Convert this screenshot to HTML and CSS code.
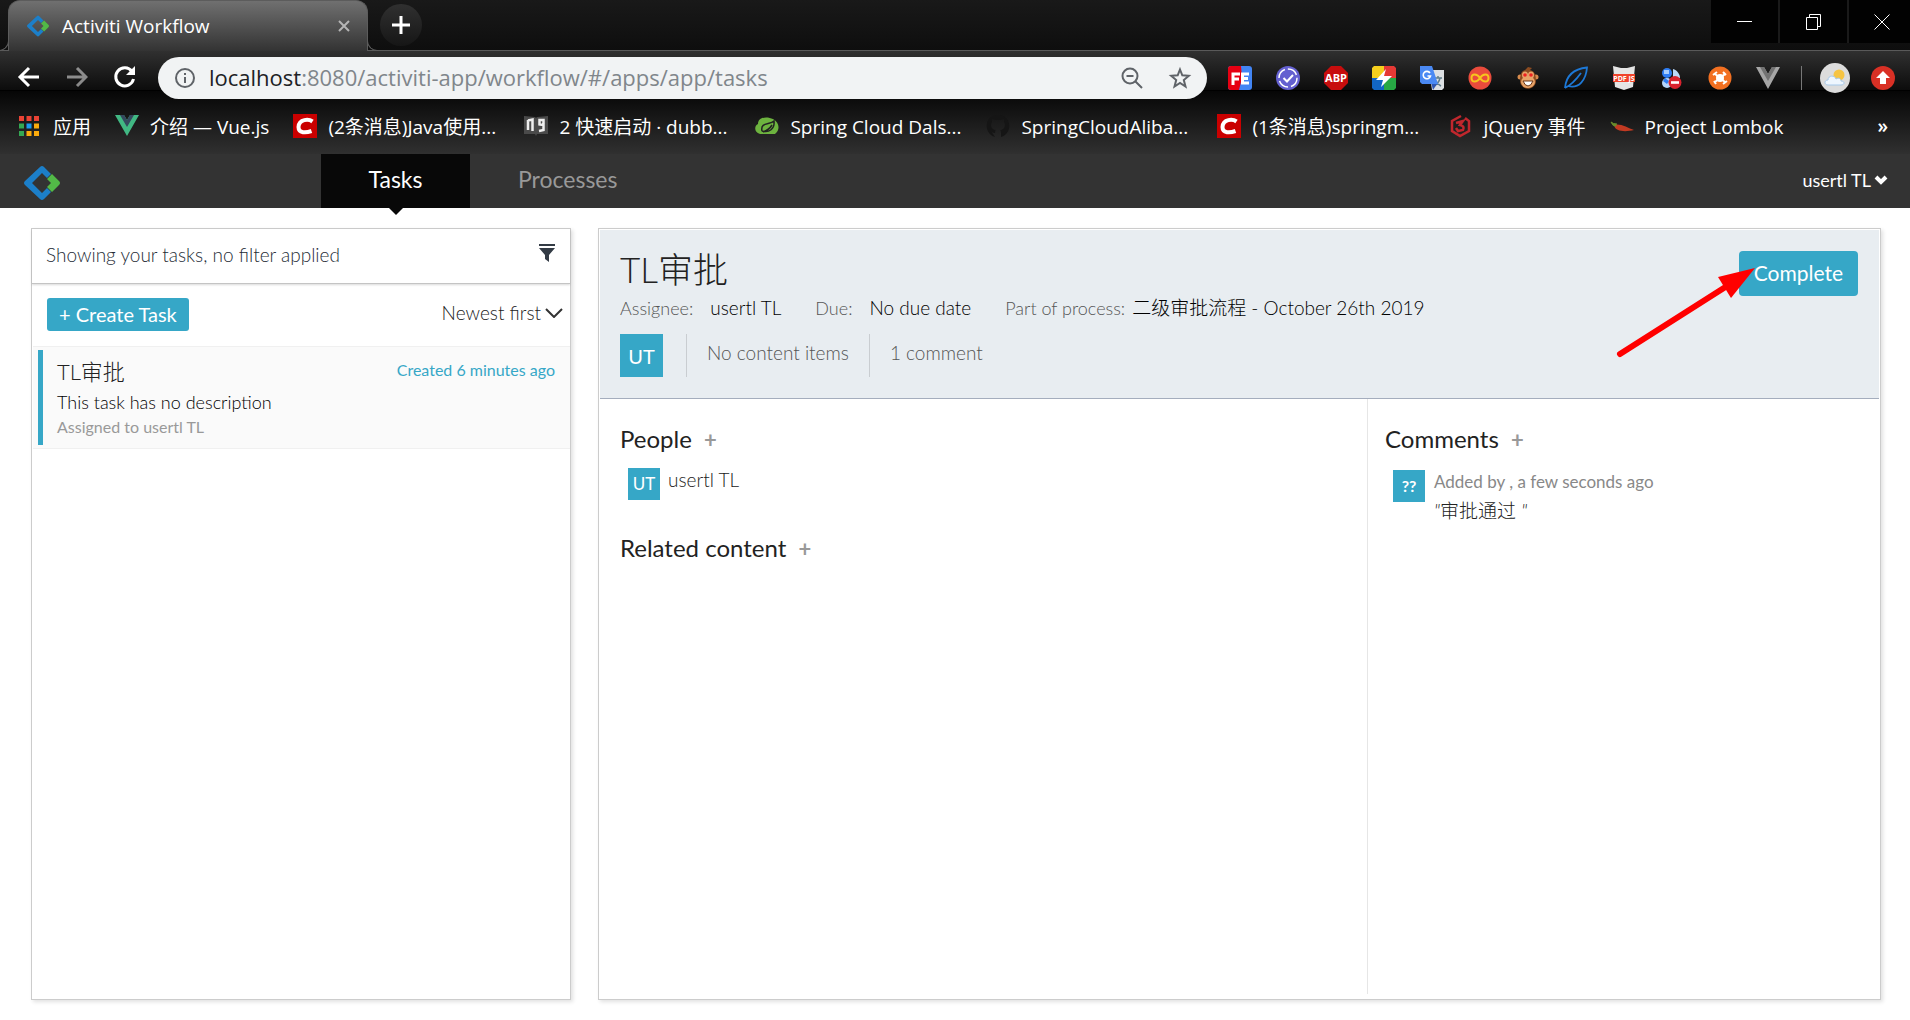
FILE: index.html
```html
<!DOCTYPE html>
<html lang="en">
<head>
<meta charset="utf-8">
<title>Activiti Workflow</title>
<link rel="stylesheet" href="styles.css">
</head>
<body>
<svg class="defs" aria-hidden="true">
  <symbol id="diamond" viewBox="0 0 36 36">
    <path d="M27 27L20 34Q18 36 16 34L1 20Q-1 18 1 16L16 2Q18 0 20 2L27 9L23 13L18 8L8 18L18 28L23 23Z" fill="#1c7fc9"/>
    <path d="M28 9L35 16Q37 18 35 20L28 27L23 22L27 18L23 14Z" fill="#52b947"/>
  </symbol>
  <symbol id="csdn" viewBox="0 0 24 24">
    <path d="M0 0H24V24H0Z" fill="#ca0000"/>
    <path d="M19.500 7.500C16 5 6 4.500 5.500 13C5.500 19.500 13 19 18.500 17" fill="none" stroke="#fff" stroke-width="4"/>
  </symbol>
</svg>

<header class="browser">
  <div class="tabstrip">
    <div class="tab">
      <svg class="tab-icon" viewBox="0 0 24 24"><use href="#diamond" x="1" y="1" width="22" height="22"/></svg>
      <span class="tab-title">Activiti Workflow</span>
      <button class="tab-close" aria-label="Close tab"><svg viewBox="0 0 12 12"><path d="M1 1L11 11M11 1L1 11"/></svg></button>
    </div>
    <button class="new-tab" aria-label="New tab"><svg viewBox="0 0 18 18"><path d="M9 0V18M0 9H18"/></svg></button>
    <div class="window-buttons">
      <button aria-label="Minimize"><svg viewBox="0 0 16 16"><path d="M0 7.500H15"/></svg></button>
      <button aria-label="Restore"><svg viewBox="0 0 16 16"><path d="M.5 3.500H11.500V15.500H.5ZM3.500 3.500V.5H14.500V12.500H11.500"/></svg></button>
      <button class="close" aria-label="Close"><svg viewBox="0 0 16 16"><path d="M.5 .5L15.500 15.500M15.500 .5L.5 15.500"/></svg></button>
    </div>
  </div>

  <div class="toolbar">
    <button class="nav-button" aria-label="Back"><svg viewBox="0 0 24 24"><path d="M23 12H4M13 3L4 12L13 21"/></svg></button>
    <button class="nav-button dim" aria-label="Forward"><svg viewBox="0 0 24 24"><path d="M3 12H22M13 3L22 12L13 21"/></svg></button>
    <button class="nav-button" aria-label="Reload"><svg viewBox="0 0 24 24"><path d="M20 6.500A9 9 0 1 0 21.500 14"/><path class="solid" d="M23 1V10H14Z"/></svg></button>
    <div class="omnibox">
      <svg class="omni-icon" viewBox="0 0 24 24"><circle cx="12" cy="12" r="9"/><path d="M12 11V17M12 7V9"/></svg>
      <div class="url"><span class="host">localhost</span>:8080/activiti-app/workflow/#/apps/app/tasks</div>
      <button class="omni-button" aria-label="Zoom"><svg class="omni-icon" viewBox="0 0 24 24"><circle cx="10" cy="10" r="7.500"/><path d="M15.500 15.500L22 22M6.500 10H13.500"/></svg></button>
      <button class="omni-button" aria-label="Bookmark"><svg class="omni-icon" viewBox="0 0 24 24"><path d="M12 3.500L14.300 9.300L20.800 9.800L15.800 14L17.500 20.500L12 17L6.500 20.500L8.200 14L3.200 9.800L9.700 9.300Z"/></svg></button>
    </div>
    <div class="extensions">
      <svg viewBox="0 0 24 24"><rect width="24" height="24" rx="3" fill="#4285f4"/><path d="M3 0H13L14 12L11 24H3Q0 24 0 21V3Q0 0 3 0" fill="#e60012"/><path d="M5 19V8H12M5 13H11M21 8H14.500V17H21M14.500 12.500H20" fill="none" stroke="#fff" stroke-width="3"/></svg>
      <svg viewBox="0 0 24 24"><circle cx="12" cy="12" r="12" fill="#6460d0"/><circle cx="12" cy="12" r="9" fill="none" stroke="#fff" stroke-width="1.500" stroke-dasharray="11 3"/><path d="M7.500 12L11 15.500L17 9" fill="none" stroke="#fff" stroke-width="2"/></svg>
      <svg viewBox="0 0 24 24"><path d="M7 0H17L24 7V17L17 24H7L0 17V7Z" fill="#c70d0d"/><text x="12" y="16" class="abp">ABP</text></svg>
      <svg viewBox="0 0 24 24"><path d="M2 0H12V12H0V2Z" fill="#f5cf1d"/><path d="M12 0H22L24 2V12H12Z" fill="#e53935"/><path d="M0 12H12V24H2L0 22Z" fill="#1266c4"/><path d="M12 12H24V22L22 24H12Z" fill="#27a844"/><path d="M14 3L4 14H11L9 21L20 10H12Z" fill="#fff"/></svg>
      <svg viewBox="0 0 24 24"><path d="M9 4H24V22L22 24H12Z" fill="#dde0e3"/><path d="M14 12H22M18 10V12M20 12Q19 17 14 20M15 14Q17 18 21 20" fill="none" stroke="#607d8b" stroke-width="1.500"/><path d="M0 0H12L18 18H2L0 16Z" fill="#4a89f3"/><path d="M11.500 18H17L13 24Z" fill="#2f56b0"/><path d="M10 7A3.700 3.700 0 1 0 10.500 10H7.500" fill="none" stroke="#fff" stroke-width="1.600"/></svg>
      <svg viewBox="0 0 24 24"><circle cx="12" cy="12" r="11.500" fill="#e94b3c"/><path d="M12 12C9 7.500 3.500 7 3.500 12S9 16.500 12 12S20.500 7 20.500 12S15 16.500 12 12" fill="none" stroke="#f7c51d" stroke-width="2"/></svg>
      <svg viewBox="0 0 24 24"><circle cx="4" cy="11" r="2.500" fill="#d78b4d"/><circle cx="20" cy="11" r="2.500" fill="#d78b4d"/><path d="M9 4L12 1L16 2L14 4C20 5 20 12 20 16C18 25 6 25 4 16C4 12 4 5 9 4" fill="#8c4b20"/><ellipse cx="12" cy="16" rx="7" ry="6" fill="#e8a468"/><ellipse cx="9" cy="9" rx="3" ry="3.500" fill="#e8a468"/><ellipse cx="15" cy="9" rx="3" ry="3.500" fill="#e8a468"/><circle cx="9" cy="9" r="1.800" fill="#e22"/><circle cx="15" cy="9" r="1.800" fill="#e22"/><path d="M7 15H17Q15 20 12 20T7 15" fill="#fff" stroke="#6b3515"/></svg>
      <svg viewBox="0 0 24 24"><path d="M1 22C2 10 9 3 23 1.500C22 14 15 23 4 20M1 22Q9 18 17 7" fill="none" stroke="#1d78d6" stroke-width="1.800"/></svg>
      <svg viewBox="0 0 24 24"><path d="M1 0L9 2H15L23 0L21 21L12 24L3 21Z" fill="#e5e5e5"/><path d="M1 8H23V16H1Z" fill="#f0432b"/><text x="12" y="15" class="pdf">PDF JS</text></svg>
      <svg viewBox="0 0 24 24"><circle cx="7" cy="7" r="5" fill="#2f7df2"/><path d="M13 3C17 4 20 8 20 12H13Z" fill="#bcd9f8"/><rect x="4" y="4" width="5" height="4" fill="#a9cdfb"/><circle cx="7" cy="17" r="5" fill="#b6d5fb"/><path d="M5 12L9 15L7 18L3 15Z" fill="#2f7df2"/><circle cx="15" cy="16.500" r="6.500" fill="#d9232e"/><path d="M11 16.500H19" stroke="#fff" stroke-width="2.600"/></svg>
      <svg viewBox="0 0 24 24"><circle cx="12" cy="12" r="11.500" fill="#f37021"/><circle cx="12" cy="12" r="4" fill="#fff"/><path d="M7 8L17 16M17 8L7 16M5 9L9 6M15 6L18 9M6 15L8 18M15 18L19 15" stroke="#fff" stroke-width="2"/></svg>
      <svg viewBox="0 0 24 24"><path d="M0 1H8L12 8L16 1H24L12 23Z" fill="#a6a6a6"/><path d="M4 1H8L12 8L16 1H20L12 15Z" fill="#737373"/></svg>
    </div>
    <div class="profile">
      <svg class="avatar" viewBox="0 0 30 30"><circle cx="15" cy="15" r="15" fill="#dcdcdc"/><circle cx="19" cy="12" r="5.500" fill="#f6c443"/><path d="M8 22C4 22 4 17 8 17C8 12 15 12 16 16C19 14 21 16 21 18C25 18 25 22 21 22Z" fill="#eef6fe" stroke="#a6c9ea"/></svg>
      <svg viewBox="0 0 24 24"><circle cx="12" cy="12" r="12" fill="#d93025"/><path d="M12 5L19 12H15V18H9V12H5Z" fill="#fff"/></svg>
    </div>
  </div>

  <nav class="bookmarks" aria-label="Bookmarks">
    <a href="#" class="apps"><svg viewBox="0 0 20 20"><path d="M0 0H5V5H0ZM7.500 0H12.500V5H7.500ZM15 0H20V5H15Z" fill="#ea4335"/><path d="M0 7.500H5V12.500H0ZM0 15H5V20H0Z" fill="#34a853"/><path d="M7.500 7.500H12.500V12.500H7.500Z" fill="#1a9af0"/><path d="M15 7.500H20V12.500H15ZM7.500 15H12.500V20H7.500ZM15 15H20V20H15Z" fill="#fbab0c"/></svg><span>应用</span></a>
    <a href="#"><svg viewBox="0 0 24 24"><path d="M0 1H9L12 6L15 1H24L12 22Z" fill="#41b883"/><path d="M5 1H9L12 6L15 1H19L12 13Z" fill="#35495e"/></svg><span>介绍 — Vue.js</span></a>
    <a href="#" class="long"><svg><use href="#csdn"/></svg><span>(2条消息)Java使用...</span></a>
    <a href="#" class="long"><svg viewBox="0 0 24 24"><path d="M0 2L11 3L12 4L13 3L24 2V20L13 20L12 22L11 20L0 20Z" fill="#4a4a4a"/><path d="M4 6V16M4 6.500L8.500 5.500V17M19.500 12V6H15.500V10.500L19.500 11V16L15 17" fill="none" stroke="#eee" stroke-width="2.500"/></svg><span>2 快速启动 · dubb...</span></a>
    <a href="#" class="long"><svg viewBox="0 0 24 24"><path d="M5 20C-1 18-1 12 3 10C3 3 12 2 18 5C25 9 25 16 20 20Z" fill="#6db33f"/><path d="M7 17C14 19 20 15 19 7C15 11 5 8 7 17M8 18Q14 16 17 11" fill="none" stroke="#222" stroke-width="1.500"/></svg><span>Spring Cloud Dals...</span></a>
    <a href="#" class="long"><svg viewBox="0 0 24 24"><path d="M9 23C-3 19-2 1 12 1S27 19 15 23V19C15 17 14.500 17 14.500 16C18 15.500 19 13 19 11C19 9 18 8.500 18 7.500V5C16 5 15 6 15 6H9S8 5 6 5V7.500C6 8.500 5 9 5 11C5 13 6 15.500 9.500 16L9 19C7 19 6 18 5 17" fill="#151515"/></svg><span>SpringCloudAliba...</span></a>
    <a href="#" class="long"><svg><use href="#csdn"/></svg><span>(1条消息)springm...</span></a>
    <a href="#"><svg viewBox="0 0 24 24"><path d="M13 2L4 7V17L12 22L21 17V7L17 4M8 9L15 7L12 11Q17 12 15 16L10 17L8 14" fill="none" stroke="#c1272d" stroke-width="2.500"/></svg><span>jQuery 事件</span></a>
    <a href="#"><svg viewBox="0 0 24 24"><path d="M4 11C10 9 18 14 24 16C16 18 5 18 4 11" fill="#c23a22"/><path d="M6 12Q3 13 1 8Q3 10 7 10" fill="#6a8b2b" stroke="#6a8b2b"/></svg><span>Project Lombok</span></a>
    <button class="more" aria-label="More bookmarks">»</button>
  </nav>
</header>

<div class="app-bar">
  <a href="#" class="brand" aria-label="Home"><svg><use href="#diamond"/></svg></a>
  <nav class="app-nav">
    <a href="#" class="active">Tasks</a>
    <a href="#">Processes</a>
  </nav>
  <button class="user-menu">usertl TL<svg viewBox="0 0 14 10"><path d="M2 2L7 7L12 2"/></svg></button>
</div>

<main class="workspace">
  <section class="task-list">
    <div class="filter">
      <span>Showing your tasks, no filter applied</span>
      <button class="filter-button" aria-label="Filter"><svg viewBox="0 0 16 18"><path d="M0 0H16V2H0ZM0 4H16L10 11V18L6 15V11Z"/></svg></button>
    </div>
    <div class="list-actions">
      <button class="create">+ Create Task</button>
      <button class="sort">Newest first<svg viewBox="0 0 18 10"><path d="M1 1L9 9L17 1"/></svg></button>
    </div>
    <article class="task">
      <div class="task-head"><h3>TL审批</h3><span class="created">Created 6 minutes ago</span></div>
      <p class="summary">This task has no description</p>
      <p class="assigned">Assigned to usertl TL</p>
    </article>
  </section>

  <section class="detail">
    <header class="detail-head">
      <div class="detail-info">
        <h1>TL审批</h1>
        <dl class="meta">
          <div><dt>Assignee:</dt><dd>usertl TL</dd></div>
          <div><dt>Due:</dt><dd>No due date</dd></div>
          <div class="process"><dt>Part of process:</dt><dd>二级审批流程 - October 26th 2019</dd></div>
        </dl>
        <div class="counts">
          <span class="badge large">UT</span>
          <span class="count">No content items</span>
          <span class="count">1 comment</span>
        </div>
      </div>
      <div class="complete-wrap">
        <button class="complete">Complete</button>
        <svg class="pointer" viewBox="0 0 142 92" aria-hidden="true"><path d="M5 86L112 18" fill="none" stroke="#f00" stroke-width="6" stroke-linecap="round"/><path d="M140 0L103 9L116 30Z" fill="#f00"/></svg>
      </div>
    </header>
    <div class="detail-body">
      <div class="main-col">
        <h2>People <button class="add" aria-label="Add person">+</button></h2>
        <div class="person"><span class="badge">UT</span><span class="person-name">usertl TL</span></div>
        <h2>Related content <button class="add" aria-label="Add content">+</button></h2>
      </div>
      <aside class="comments">
        <h2>Comments <button class="add" aria-label="Add comment">+</button></h2>
        <div class="comment">
          <span class="badge bold">??</span>
          <div><p class="byline">Added by , a few seconds ago</p><p class="quote"><i>"</i>审批通过 <i>"</i></p></div>
        </div>
      </aside>
    </div>
  </section>
</main>
</body>
</html>
```
FILE: styles.css
```css
* { box-sizing: border-box; }
html { height: 100%; }
body {
  margin: 0;
  min-height: 100%;
  display: flex;
  flex-direction: column;
  background: #fff;
  color: #222;
  font-family: Lato, "Noto Sans CJK SC", sans-serif;
  font-size: 19px;
  font-weight: 300;
  line-height: 24px;
}
h1, h2, h3, p, dl, dd { margin: 0; font-weight: 300; }
button { padding: 0; border: 0; background: none; color: inherit; font: inherit; cursor: pointer; }
a { color: inherit; text-decoration: none; }
svg { display: block; flex: none; }
.defs { position: absolute; width: 0; height: 0; }

/* Browser frame */
.browser { color: #fff; font-family: "Open Sans", "Noto Sans CJK SC", sans-serif; font-weight: 400; white-space: nowrap; }
.tabstrip {
  display: flex;
  height: 51px;
  padding-left: 8px;
  background: linear-gradient(#191919, #0e0e0e);
  border-bottom: 1px solid #5a5a5a;
}
.tab {
  position: relative;
  display: flex;
  align-items: center;
  width: 360px;
  height: 51px;
  padding: 0 13px 0 17px;
  border: 1px solid #5c5c5c;
  border-bottom: 0;
  border-radius: 12px 12px 0 0;
  background: linear-gradient(#707070, #333);
}
.tab::before, .tab::after {
  content: "";
  position: absolute;
  bottom: 0;
  width: 10px;
  height: 10px;
  border-bottom: 1px solid #5c5c5c;
}
.tab::before { right: 100%; border-right: 1px solid #5c5c5c; border-radius: 0 0 10px 0; }
.tab::after { left: 100%; border-left: 1px solid #5c5c5c; border-radius: 0 0 0 10px; }
.tab-icon { width: 24px; height: 24px; }
.tab-title { flex: 1; margin-left: 12px; }
.tab-close { padding: 4px; }
.tab-close svg { width: 12px; height: 12px; fill: none; stroke: #b5b5b5; stroke-width: 2; }
.new-tab {
  display: grid;
  place-items: center;
  width: 42px;
  height: 42px;
  margin: 4px 0 0 12px;
  border-radius: 50%;
  background: linear-gradient(#303030, #161616);
}
.new-tab svg { width: 18px; height: 18px; stroke: #fff; stroke-width: 3; }
.window-buttons { display: flex; gap: 2px; height: 43px; margin-left: auto; background: #1a1a1a; }
.window-buttons button { display: grid; place-items: center; width: 67px; background: #020202; }
.window-buttons .close { width: 61px; padding-left: 4px; }
.window-buttons svg { width: 16px; height: 16px; fill: none; stroke: #fff; }

.toolbar {
  display: flex;
  align-items: center;
  height: 40px;
  padding: 0 15px 0 16px;
  background: linear-gradient(#303030, #0c0c0c);
  border-bottom: 1px solid #000;
}
.nav-button { width: 24px; height: 24px; margin: 14px 24px 0 0; align-self: flex-start; }
.nav-button svg { width: 24px; height: 24px; fill: none; stroke: #fff; stroke-width: 3; }
.nav-button.dim { opacity: .5; }
.nav-button .solid { fill: #fff; stroke: none; }
.omnibox {
  position: relative;
  z-index: 1;
  display: flex;
  align-items: center;
  flex: 1;
  height: 42px;
  margin: 6px 0 -8px -2px;
  align-self: flex-start;
  padding: 0 15px;
  border-radius: 21px;
  background: #f1f3f4;
  color: #80868b;
}
.omni-icon { width: 24px; height: 24px; fill: none; stroke: #5f6368; stroke-width: 2; }
.url { flex: 1; margin-left: 12px; padding-bottom: 2px; font-size: 22px; }
.host { color: #202124; }
.omni-button { margin-left: 24px; }
.extensions { display: flex; gap: 24px; margin: 14px 0 0 21px; }
.extensions svg, .profile svg { width: 24px; height: 24px; }
.abp { font: 700 11px "Open Sans", sans-serif; fill: #fff; text-anchor: middle; }
.pdf { font: 700 7px "Open Sans", sans-serif; fill: #fff; text-anchor: middle; }
.profile { display: flex; align-items: center; gap: 21px; margin: 14px 0 0 21px; padding-left: 18px; border-left: 1px solid #777; height: 24px; }
.profile .avatar { width: 30px; height: 30px; }

.bookmarks {
  display: flex;
  align-items: center;
  gap: 24px;
  height: 63px;
  padding: 7px 22px 0 19px;
  background: linear-gradient(#060606, #303030);
}
.bookmarks a { display: flex; align-items: center; gap: 11px; }
.bookmarks .long { width: 207px; }
.bookmarks svg { width: 24px; height: 24px; }
.bookmarks .apps { gap: 14px; }
.bookmarks .apps svg { width: 20px; height: 20px; }
.bookmarks span { padding-top: 1px; }
.more { margin-left: auto; font-weight: 600; }

/* Application bar */
.app-bar { display: flex; height: 54px; background: #333; color: #fff; font-weight: 400; }
.brand { width: 321px; padding: 11px 0 0 24px; }
.brand svg { width: 36px; height: 36px; }
.app-nav { display: flex; font-size: 23px; line-height: 51px; }
.app-nav a { padding: 0 48px; color: #999; }
.app-nav .active { position: relative; width: 149px; padding: 0; text-align: center; background: #080808; color: #fff; }
.active::after {
  content: "";
  position: absolute;
  top: 100%;
  left: 50%;
  margin-left: -7px;
  border: 7px solid transparent;
  border-top-color: #080808;
  border-bottom: 0;
}
.user-menu { display: flex; align-items: center; gap: 3px; margin: 0 22px 3px auto; font-size: 18px; }
.user-menu svg { width: 14px; height: 10px; fill: none; stroke: #fff; stroke-width: 4; }

/* Panels */
.workspace {
  flex: 1;
  display: grid;
  grid-template-columns: 540px 1fr;
  gap: 27px;
  padding: 20px 29px 20px 31px;
}
.task-list, .detail { border: 1px solid #ccc; box-shadow: 2px 2px 4px rgba(0, 0, 0, .12); }
.filter {
  display: flex;
  align-items: center;
  justify-content: space-between;
  height: 55px;
  padding: 0 15px 2px 14px;
  border-bottom: 1px solid #c4c4c4;
  box-shadow: 0 1px 2px rgba(0, 0, 0, .15);
  color: #252c36;
}
.filter-button { padding-bottom: 4px; }
.filter-button svg { width: 16px; height: 18px; fill: #333b45; }
.list-actions { display: flex; align-items: center; justify-content: space-between; height: 62px; padding: 0 7px 2px 15px; }
.create { height: 33px; padding: 0 12px; border-radius: 3px; background: #36a7c7; color: #fff; font-size: 20px; font-weight: 400; }
.sort { display: flex; align-items: center; gap: 4px; padding-bottom: 2px; }
.sort svg { width: 18px; height: 10px; fill: none; stroke: #333; stroke-width: 2; }
.task {
  margin-left: 1px;
  padding: 3px 0;
  border: solid #f0f0f0;
  border-width: 1px 0;
  background: #fafafa;
}
.task > * { margin-left: 5px; padding: 0 15px 0 14px; border-left: 5px solid #36a7c7; }
.task-head { display: flex; justify-content: space-between; padding-top: 6px; }
.task h3 { font-size: 22px; line-height: 32px; }
.created { color: #36a7c7; font-size: 16px; font-weight: 400; line-height: 28px; }
.task .summary { line-height: 28px; font-size: 18px; color: #000; }
.task .assigned { color: #999; font-size: 16px; font-weight: 400; line-height: 22px; padding-bottom: 7px; }

.detail { display: flex; flex-direction: column; padding: 1px; }
.detail-head { display: flex; justify-content: space-between; height: 169px; padding: 19px 21px 0 20px; background: #e8edf1; border-bottom: 1px solid #a4adbd; }
.detail h1 { margin-top: -2px; font-size: 35px; line-height: 44px; }
.meta { display: flex; line-height: 34px; }
.meta div { display: flex; margin-right: 34px; }
.meta dt { color: #555; margin-right: 17px; font-size: 18px; }
.meta dd { color: #000; }
.meta .process dt { margin-right: 7px; }
.counts { display: flex; margin-top: 9px; }
.badge { display: block; flex: none; width: 32px; height: 32px; background: #36a7c7; color: #fff; text-align: center; font-size: 17px; font-weight: 400; line-height: 32px; }
.badge.large { width: 43px; height: 43px; margin-right: 23px; font-size: 20px; line-height: 45px; }
.badge.bold { font-size: 16px; font-weight: 700; }
.count { padding: 0 20px; border-left: 1px solid #c9cdd1; color: #555; line-height: 38px; }
.complete-wrap { position: relative; margin-top: 2px; }
.complete { height: 45px; padding: 0 15px 2px; border-radius: 4px; background: #36a7c7; color: #fff; font-size: 21px; font-weight: 400; }
.pointer { position: absolute; top: 17px; right: 101px; width: 142px; height: 92px; }
.detail-body { flex: 1; display: grid; grid-template-columns: 1fr 512px; }
.main-col { padding: 24px 20px; }
.comments { margin-bottom: 4px; padding: 24px 17px; border-left: 1px solid #e6e6e6; }
.detail h2 { font-size: 24px; font-weight: 400; line-height: 32px; }
.add { margin-left: 6px; color: #999; font-weight: 700; font-size: 22px; }
.person { display: flex; margin: 12px 0 32px 8px; }
.person-name { margin-left: 8px; }
.comment { display: flex; margin: 14px 0 0 8px; }
.comment p { margin-left: 9px; }
.comment .byline { color: #888; font-size: 17px; font-weight: 400; }
.comment .quote { line-height: 34px; }
```
